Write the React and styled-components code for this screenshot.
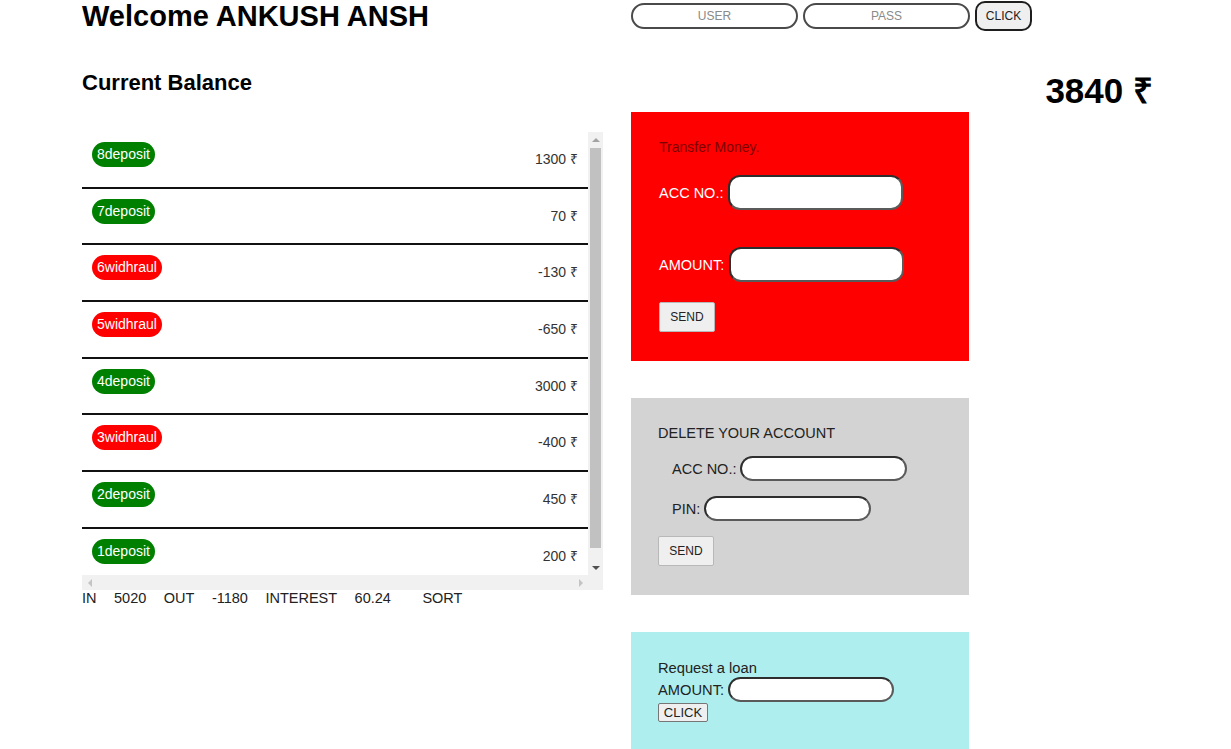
import React from "react";
import styled, { createGlobalStyle } from "styled-components";

const GlobalStyle = createGlobalStyle`
  html, body { margin: 0; padding: 0; background: #fff; }
  body { font-family: "Liberation Sans", Arial, sans-serif; color: #222; }
  * { box-sizing: border-box; }
`;

const Page = styled.div`
  padding: 0 80px 0 82px;
  width: 1231px;
`;

const TopBar = styled.header`
  display: grid;
  grid-template-columns: 521px 1fr;
  column-gap: 28px;
  height: 32px;
`;

const Title = styled.h1`
  margin: 0;
  font-size: 29px;
  line-height: 32px;
  font-weight: bold;
  color: #000;
`;

const Login = styled.form`
  display: flex;
  align-items: center;
  gap: 5px;
  height: 32px;
`;

const LoginInput = styled.input`
  width: 167px;
  height: 26px;
  border: 2px solid #4a4a4a;
  border-radius: 13px;
  text-align: center;
  font-family: inherit;
  font-size: 12px;
  outline: none;
  background: #fff;
  &::placeholder { color: #8a8a8a; }
`;

const LoginButton = styled.button`
  width: 57px;
  height: 30px;
  border: 2px solid #1e1e1e;
  border-radius: 10px;
  background: #efefef;
  font-family: inherit;
  font-size: 12px;
  color: #222;
  padding: 0;
`;

const BalanceRow = styled.div`
  display: flex;
  justify-content: space-between;
  align-items: flex-start;
  margin-top: 38px;
  height: 42px;
`;

const BalanceLabel = styled.h2`
  margin: 0;
  font-size: 22px;
  line-height: 26px;
  font-weight: bold;
  color: #000;
`;

const BalanceValue = styled.p`
  margin: 0;
  font-size: 35px;
  line-height: 38px;
  font-weight: bold;
  color: #000;
  position: relative;
  top: 2px;
  right: -2px;
`;

const Main = styled.main`
  display: grid;
  grid-template-columns: 521px 338px;
  column-gap: 28px;
  align-items: start;
`;

const LeftCol = styled.section`
  padding-top: 20px;
`;

/* list with a classic-style scrollbar frame */
const ListFrame = styled.div`
  display: grid;
  grid-template-columns: 506px 15px;
  grid-template-rows: 443px 15px;
`;

const ListViewport = styled.div`
  overflow: hidden;
`;

const VTrack = styled.div`
  background: #f1f1f1;
  display: flex;
  flex-direction: column;
`;

const HTrack = styled.div`
  background: #f1f1f1;
  display: flex;
  justify-content: space-between;
`;

const Corner = styled.div`
  background: #f1f1f1;
`;

const ArrowBox = styled.div`
  width: 15px;
  height: 15px;
  flex: none;
  display: flex;
  align-items: center;
  justify-content: center;
`;

const Arrow = styled.span`
  width: 0;
  height: 0;
  border: 4px solid transparent;
  ${(p) =>
    p.$dir === "up"
      ? `border-bottom-color: ${p.$c}; border-top-width: 0;`
      : p.$dir === "down"
      ? `border-top-color: ${p.$c}; border-bottom-width: 0;`
      : p.$dir === "left"
      ? `border-right-color: ${p.$c}; border-left-width: 0;`
      : `border-left-color: ${p.$c}; border-right-width: 0;`}
`;

const Thumb = styled.div`
  height: 400px;
  margin: 1px 2px 0;
  background: #c1c1c1;
`;

const Spacer = styled.div`
  flex: 1;
`;

const Row = styled.div`
  display: flex;
  justify-content: space-between;
  align-items: flex-start;
  height: 56.67px;
  padding: 10px 10px 0 10px;
  border-bottom: 2px solid #111;
`;

const Badge = styled.span`
  display: inline-block;
  height: 25px;
  line-height: 25px;
  padding: 0 5px;
  border-radius: 13px;
  font-size: 14px;
  color: #fff;
  background: ${(p) => (p.$type === "deposit" ? "#008000" : "#f00")};
`;

const Amount = styled.span`
  font-size: 14px;
  line-height: 16px;
  margin-top: 9px;
  color: #333;
`;

const Summary = styled.div`
  display: flex;
  gap: 17.5px;
  font-size: 14.5px;
  line-height: 16px;
  color: #222;
`;

const SortLabel = styled.span`
  margin-left: 14px;
`;

const RightCol = styled.section`
  display: flex;
  flex-direction: column;
  gap: 37px;
`;

const Panel = styled.div`
  background: ${(p) => p.$bg};
  height: ${(p) => p.$h}px;
  padding: 27px 28px 0 ${(p) => p.$pl || 28}px;
  display: flex;
  flex-direction: column;
  align-items: flex-start;
`;

const PanelTitle = styled.div`
  font-size: ${(p) => p.$size || 14}px;
  line-height: ${(p) => p.$lh || 16}px;
  color: ${(p) => p.$color || "#222"};
  margin-bottom: ${(p) => p.$mb || 0}px;
`;

const Field = styled.label`
  display: flex;
  align-items: center;
  gap: ${(p) => p.$gap || 4}px;
  font-size: ${(p) => p.$size || 14}px;
  color: ${(p) => p.$color || "#222"};
  margin: ${(p) => p.$m || "0"};
`;

const TextBox = styled.input`
  width: ${(p) => p.$w}px;
  height: ${(p) => p.$h}px;
  border-radius: ${(p) => (p.$h > 30 ? 12 : 13)}px;
  border: 2px solid #5a5a5a;
  border-top-color: #2e2e2e;
  border-left-color: #2e2e2e;
  background: #fff;
  outline: none;
  font-family: inherit;
  padding: 0 8px;
`;

const SendButton = styled.button`
  width: 56px;
  height: 30px;
  background: #efefef;
  border: 1px solid #b8b8b8;
  border-radius: 2px;
  font-family: inherit;
  font-size: 12px;
  color: #222;
  padding: 0;
  margin-top: ${(p) => p.$mt || 0}px;
`;

const SmallButton = styled.button`
  width: 50px;
  height: 19px;
  background: #efefef;
  border: 1px solid #767676;
  border-radius: 2px;
  font-family: inherit;
  font-size: 13px;
  color: #222;
  padding: 0;
  margin-top: 1px;
`;

const movements = [
  { n: 8, type: "deposit", amt: "1300" },
  { n: 7, type: "deposit", amt: "70" },
  { n: 6, type: "widhraul", amt: "-130" },
  { n: 5, type: "widhraul", amt: "-650" },
  { n: 4, type: "deposit", amt: "3000" },
  { n: 3, type: "widhraul", amt: "-400" },
  { n: 2, type: "deposit", amt: "450" },
  { n: 1, type: "deposit", amt: "200" },
];

export default function App() {
  return (
    <>
      <GlobalStyle />
      <Page>
        <TopBar>
          <Title>Welcome ANKUSH ANSH</Title>
          <Login onSubmit={(e) => e.preventDefault()}>
            <LoginInput placeholder="USER" />
            <LoginInput placeholder="PASS" />
            <LoginButton>CLICK</LoginButton>
          </Login>
        </TopBar>
        <BalanceRow>
          <BalanceLabel>Current Balance</BalanceLabel>
          <BalanceValue>3840 ₹</BalanceValue>
        </BalanceRow>
        <Main>
          <LeftCol>
            <ListFrame>
              <ListViewport>
                {movements.map((m) => (
                  <Row key={m.n}>
                    <Badge $type={m.type}>
                      {m.n}
                      {m.type}
                    </Badge>
                    <Amount>{m.amt} ₹</Amount>
                  </Row>
                ))}
              </ListViewport>
              <VTrack>
                <ArrowBox>
                  <Arrow $dir="up" $c="#a3a3a3" />
                </ArrowBox>
                <Thumb />
                <Spacer />
                <ArrowBox>
                  <Arrow $dir="down" $c="#505050" />
                </ArrowBox>
              </VTrack>
              <HTrack>
                <ArrowBox>
                  <Arrow $dir="left" $c="#c4c4c4" />
                </ArrowBox>
                <ArrowBox>
                  <Arrow $dir="right" $c="#c4c4c4" />
                </ArrowBox>
              </HTrack>
              <Corner />
            </ListFrame>
            <Summary>
              <span>IN</span>
              <span>5020</span>
              <span>OUT</span>
              <span>-1180</span>
              <span>INTEREST</span>
              <span>60.24</span>
              <SortLabel>SORT</SortLabel>
            </Summary>
          </LeftCol>
          <RightCol>
            <Panel $bg="#ff0000" $h={249}>
              <PanelTitle $color="#7a0000" $mb={20}>Transfer Money.</PanelTitle>
              <Field $color="#fff" $size={14.5} $gap={5}>
                ACC NO.:
                <TextBox $w={175} $h={35} />
              </Field>
              <Field $color="#fff" $size={14.5} $gap={5} $m="37px 0 0 0">
                AMOUNT:
                <TextBox $w={175} $h={35} />
              </Field>
              <SendButton $mt={20}>SEND</SendButton>
            </Panel>
            <Panel $bg="#d3d3d3" $h={197} $pl={27}>
              <PanelTitle $size={14.5} $mb={15}>DELETE YOUR ACCOUNT</PanelTitle>
              <Field $size={14.5} $m="0 0 0 14px">
                ACC NO.:
                <TextBox $w={167} $h={25} />
              </Field>
              <Field $size={14.5} $m="15px 0 0 14px">
                PIN:
                <TextBox $w={167} $h={25} />
              </Field>
              <SendButton $mt={15}>SEND</SendButton>
            </Panel>
            <Panel $bg="#afeeee" $h={130} $pl={27}>
              <PanelTitle $size={14.7} $lh={18}>Request a loan</PanelTitle>
              <Field $size={14.7}>
                AMOUNT:
                <TextBox $w={166} $h={25} />
              </Field>
              <SmallButton>CLICK</SmallButton>
            </Panel>
          </RightCol>
        </Main>
      </Page>
    </>
  );
}
